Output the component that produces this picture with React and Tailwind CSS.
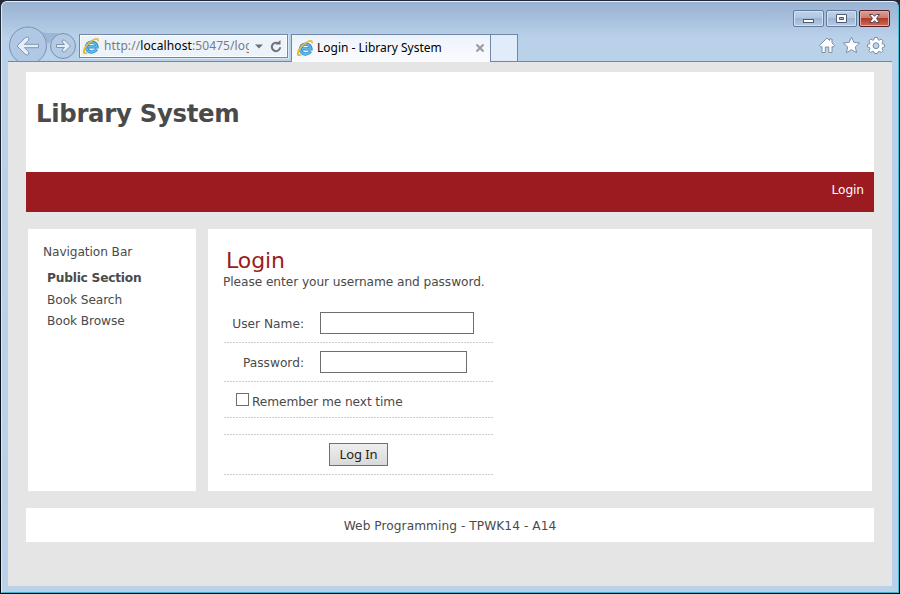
import React from "react";

function IeLogo() {
  return (
    <svg width="18" height="18" viewBox="0 0 18 18" className="shrink-0">
      <path d="M14.500 12.200A5.300 4.900 0 1 1 15 9.900H5.800" fill="none" stroke="#2b86c6" strokeWidth="3.200" />
      <path d="M14.300 12.200A5.300 4.900 0 1 1 14.800 9.900H5.800" fill="none" stroke="#5cb9ea" strokeWidth="1.900" />
      <path d="M5.500 16.500C1 18.300-.2 15.500 1.700 11.500C3.800 7.200 8.500 3 12.500 1.400C15.800.2 17.500 1.500 16.600 4.800L15.400 4.300C15.600 2.800 14.500 2.400 12.900 3C9 4.500 5 8.500 3.300 12.500C2.300 14.800 3 15.900 5.500 15.300Z" fill="#ecb92a" />
    </svg>
  );
}

function NavButtons() {
  return (
    <svg width="72" height="35" viewBox="6 26 72 35" className="block shrink-0">
      <path d="M35 29C43 34 50 33 58 33L54 38L48 44L44 36Z" fill="#8fa9c7" opacity=".65" />
      <circle cx="28" cy="45.500" r="18.500" fill="#b0c8e3" stroke="#7b90ae" />
      <circle cx="63" cy="46" r="12.500" fill="#b3cae5" stroke="#7b90ae" />
      <path d="M17 46L25 37.800Q27.500 36 29 38.200L28.500 40.500L24.500 44.300H38.500V47.700H24.500L28.500 51.500L29 54Q27.500 56 25 54.200Z" fill="#e4eef9" stroke="#8195b2" strokeLinejoin="round" />
      <path d="M70.500 46L64.500 40Q62 39.500 62 42L64.500 44.500H56.500V47.500H64.500L62 50Q62 52.500 64.500 52Z" fill="#e4eef9" stroke="#8195b2" strokeLinejoin="round" />
    </svg>
  );
}

function ToolIcons() {
  return (
    <svg width="74" height="22" viewBox="815 34 74 22" className="block shrink-0">
      <g fill="#fff" stroke="#7d8fa9" strokeLinejoin="round">
        <path d="M819.500 45.500L827 38L829.500 40.500V39H832V43L834.500 45.500L833 47.300L832 46.500V52.500H828.800V47H825.300V52.500H822V46.500L821 47.300Z" />
        <path d="M851.500 37L853.900 42.400L859.700 43L855.300 46.900L856.600 52.700L851.500 49.700L846.400 52.700L847.700 46.900L843.300 43L849.100 42.400Z" />
        <path fillRule="evenodd" d="M874.500 37.500H877.500L878 39.700L879.200 40.200L881.200 39L883.200 41L882 43L882.500 44L884.500 44.500V47L882.500 47.500L882 48.700L883.200 50.700L881.200 52.500L879.200 51.300L878 51.900L877.500 53.500H874.500L874 51.900L872.800 51.300L870.800 52.500L868.800 50.700L870 48.700L869.500 47.500L867.500 47V44.500L869.500 44L870 43L868.800 41L870.800 39L872.800 40.200L874 39.700ZM876 42.700A3 3 0 1 0 876 48.700A3 3 0 1 0 876 42.700Z" />
      </g>
    </svg>
  );
}

function WindowButton({ kind }) {
  const close = kind === "close";
  return (
    <div
      className={
        close
          ? "h-[17px] w-[31px] rounded-[2px] border border-[#58202a] bg-[linear-gradient(to_bottom,#d9a096,#cd7d70_45%,#b23a2a_50%,#cf6c57)] shadow-[inset_0_0_0_1px_#dfaaa5]"
          : "h-[17px] w-[31px] rounded-[2px] border border-[#627b9c] bg-[linear-gradient(to_bottom,#bdd1e7,#b2c8e0_45%,#9bb6d2_50%,#b5cce5)] shadow-[inset_0_0_0_1px_#d3e2f2]"
      }
    >
      <svg width="29" height="15" viewBox="0 0 29 15" className="block">
        {kind === "min" && <rect x="9.500" y="8.500" width="10" height="3" fill="#fff" stroke="#515a6e" />}
        {kind === "max" && (
          <path fillRule="evenodd" d="M9.500 3.500H19.500V11.500H9.500ZM12.500 6.500V8.500H16.500V6.500Z" fill="#fff" stroke="#515a6e" />
        )}
        {close && (
          <path d="M9.500 3.500H12.800L14.500 5.300L16.200 3.500H19.500L16.500 7.500L19.500 11.500H16.200L14.500 9.700L12.800 11.500H9.500L12.500 7.500Z" fill="#fff" stroke="#5a4550" />
        )}
      </svg>
    </div>
  );
}

function BrowserChrome() {
  return (
    <header className="flex h-[60px] flex-col">
      <div className="flex h-[24px] justify-end gap-[2px] pt-[8px] pr-[8px]">
        <WindowButton kind="min" />
        <WindowButton kind="max" />
        <WindowButton kind="close" />
      </div>
      <div className="flex h-[36px] pl-[4px] font-['Noto_Sans',sans-serif] text-[12px]">
        <NavButtons />
        <div className="mt-[8px] ml-px flex h-[24px] w-[209px] items-center border border-[#7187a3] bg-[#edf3fb] pl-[2px] shadow-[inset_0_0_0_1px_#fff,1px_1px_0_#dce9f7]">
          <IeLogo />
          <div className="ml-[4px] w-[145px] overflow-hidden whitespace-nowrap tracking-[0.1px] text-[#777b82]">
            http://<span className="text-black">localhost</span>:50475/log
          </div>
          <svg width="34" height="20" viewBox="0 0 34 20" className="block shrink-0">
            <path d="M6 8.500H14L10 12.500Z" fill="#6d7178" />
            <path d="M29.300 7.400A4.200 4.200 0 1 0 31.200 11.200" fill="none" stroke="#6d7178" strokeWidth="2" />
            <path d="M26.500 8.500H31.500V4Z" fill="#6d7178" />
          </svg>
        </div>
        <div className="mt-[8px] ml-[3px] flex h-[28px] w-[200px] items-center border border-b-0 border-[#7187a3] bg-linear-to-b from-[#edf3fb] to-[#fbfcfe] pb-px pl-[4px]">
          <IeLogo />
          <span className="ml-[3px] w-[157px] whitespace-nowrap text-black">Login - Library System</span>
          <svg width="10" height="10" viewBox="0 0 10 10" className="ml-[1px] shrink-0">
            <path d="M1.500 1.500L8.500 8.500M8.500 1.500L1.500 8.500" stroke="#9a9da2" strokeWidth="2.200" />
          </svg>
        </div>
        <div className="mt-[8px] h-[27px] w-[27px] border border-b-0 border-l-0 border-[#7187a3] bg-[#e0ecfa]" />
        <div className="mt-[8px] mr-[9px] ml-auto">
          <ToolIcons />
        </div>
      </div>
    </header>
  );
}

function DottedRule() {
  return <div className="h-px w-full bg-[repeating-linear-gradient(to_right,#cecece_0px,#cecece_2px,#fff_2px,#fff_3px)]" />;
}

function FormRow({ label, children }) {
  return (
    <>
      <div className="flex h-[38px] items-center">
        <div className="w-[80px] pt-[3px] text-right tracking-[0px] whitespace-nowrap">{label}</div>
        <div className="ml-[16px]">{children}</div>
      </div>
      <DottedRule />
    </>
  );
}

function LoginCard() {
  return (
    <main className="h-[262px] w-[664px] bg-white pt-[17px] pl-[16px]">
      <h2 className="h-[27px] pl-[2px] text-[22px] leading-[29px] tracking-[-0.1px] text-[#9b1b20]">Login</h2>
      <p className="ml-[-1px] h-[31px] leading-[18px] tracking-[-0.07px] whitespace-nowrap">Please enter your username and password.</p>
      <div className="w-[269px]">
        <FormRow label="User Name:">
          <input type="text" className="block h-[22px] w-[154px] border border-[#6e6e6e] bg-white" />
        </FormRow>
        <FormRow label="Password:">
          <input type="password" className="block h-[22px] w-[147px] border border-[#6e6e6e] bg-white" />
        </FormRow>
        <label className="flex h-[35px] items-center pl-[12px]">
          <input type="checkbox" className="h-[13px] w-[13px] appearance-none border border-[#6e6e6e] bg-white" />
          <span className="ml-[3px] pt-[6px] whitespace-nowrap">Remember me next time</span>
        </label>
        <DottedRule />
        <div className="h-[16px]" />
        <DottedRule />
        <div className="flex h-[39px] items-center justify-center">
          <button className="h-[23px] w-[59px] border border-[#707070] bg-linear-to-b from-[#efefef] to-[#d9d9d9] pb-px font-['Noto_Sans',sans-serif] text-[13px] leading-[20px] tracking-[-0.1px] whitespace-nowrap text-[#222]">
            Log In
          </button>
        </div>
        <DottedRule />
      </div>
    </main>
  );
}

export default function App() {
  return (
    <div className="h-[594px] w-[900px] overflow-hidden bg-[#10151c] bg-linear-to-b from-[#222a38] to-[#06090c] p-px">
      <div className="h-[592px] w-[898px] overflow-hidden rounded-t-[6px] border border-t-[#e5eef8] border-r-[#45bfd4] border-b-[#45b4c9] border-l-[#dce9f7] bg-[#bad1ea] bg-[linear-gradient(to_bottom,#98b2d1_0px,#a9c1de_18px,#bad1ea_36px)]">
        <BrowserChrome />
        <div className="mt-[-1px] ml-[6px] h-[525px] w-[884px] border-t border-[#7187a3] bg-[#e5e5e5] px-[18px] pt-[10px] font-['DejaVu_Sans',Verdana,sans-serif] text-[12.2px] tracking-[-0.09px] text-[#4a4a4a]">
          <div className="h-[100px] bg-white pt-[24px] pl-[10px]">
            <h1 className="text-[24.4px] leading-[36px] font-bold tracking-[-0.32px] whitespace-nowrap">Library System</h1>
          </div>
          <nav className="flex h-[40px] justify-end bg-[#9b1b20] pt-[8px] pr-[10px] leading-[20px] text-white">Login</nav>
          <div className="flex gap-[12px] px-[2px] pt-[17px]">
            <aside className="h-[262px] w-[168px] bg-white pt-[12px] pl-[15px] whitespace-nowrap">
              <div className="h-[26px] leading-[22px]">Navigation Bar</div>
              <ul className="pl-[4px] leading-[22px]">
                <li className="font-bold tracking-[-0.22px]">Public Section</li>
                <li>Book Search</li>
                <li className="leading-[20px]">Book Browse</li>
              </ul>
            </aside>
            <LoginCard />
          </div>
          <footer className="mt-[17px] h-[34px] bg-white text-center leading-[36px] tracking-[0.05px]">Web Programming - TPWK14 - A14</footer>
        </div>
      </div>
    </div>
  );
}
